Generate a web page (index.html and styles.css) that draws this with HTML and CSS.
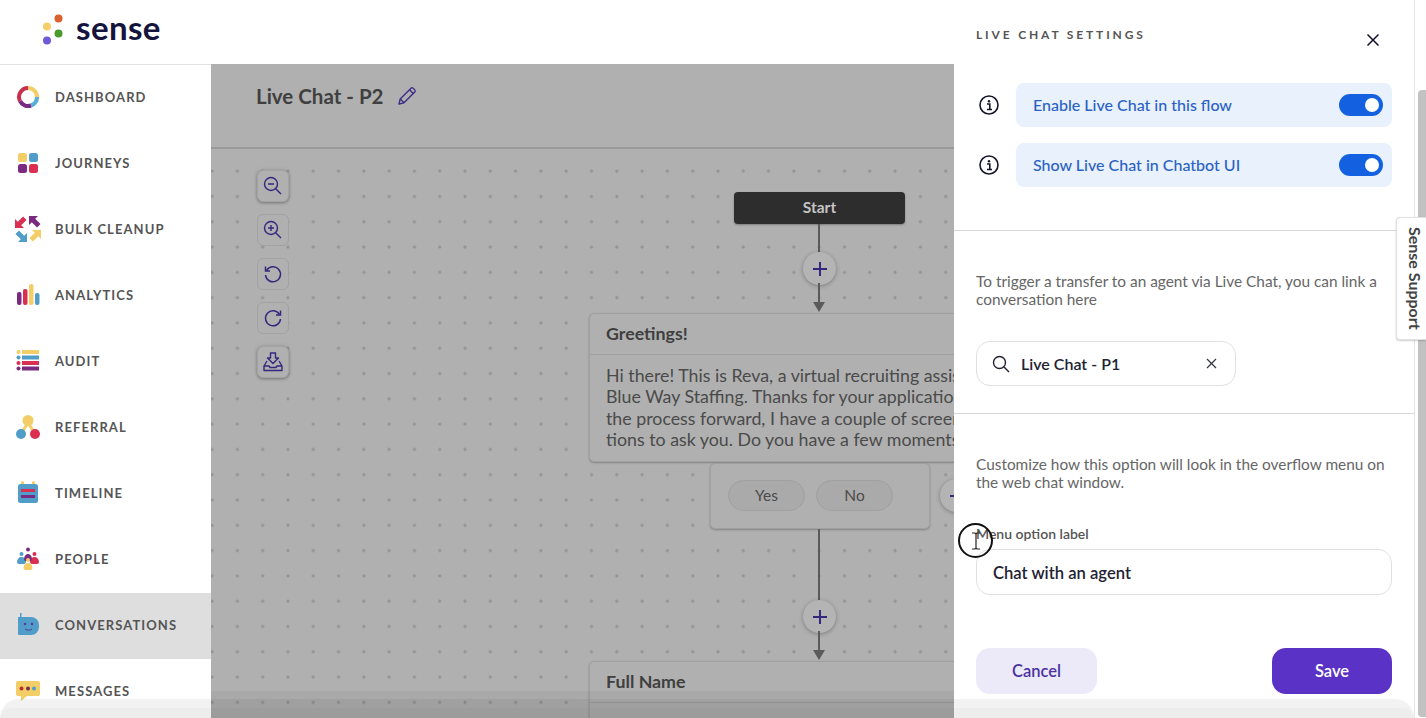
FILE: index.html
```html
<!DOCTYPE html>
<html lang="en">
<head>
    <meta charset="UTF-8">
    <title>Live Chat - P2</title>
    <link rel="stylesheet" href="styles.css">
</head>
<body>
    <div class="app">
        <header class="topbar">
            <svg class="logo-dots" width="26" height="34" viewBox="0 0 26 34">
                <circle cx="4" cy="12.500" r="4" fill="#f6cf6a"/>
                <circle cx="15.500" cy="4.500" r="4" fill="#d9612f"/>
                <circle cx="15.500" cy="19.500" r="4" fill="#4a9a2c"/>
                <circle cx="4" cy="26.500" r="4" fill="#7159d8"/>
            </svg>
            <span class="logo-text">sense</span>
        </header>
        <div class="body-row">
            <nav class="sidebar">
                <a class="nav-item">
                    <svg class="nav-icon" viewBox="0 0 24 24" fill="none" stroke-width="4">
                        <path d="M12 3a9 9 0 0 1 9 9" stroke="#f3cd66"/>
                        <path d="M21 12a9 9 0 0 1-6 8.500" stroke="#58aed6"/>
                        <path d="M15 20.500A9 9 0 0 1 4 16" stroke="#7a2a80"/>
                        <path d="M4 16A9 9 0 0 1 12 3" stroke="#c8304f"/>
                    </svg>
                    <span>DASHBOARD</span>
                </a>
                <a class="nav-item">
                    <svg class="nav-icon" viewBox="0 0 24 24">
                        <rect x="2" y="2" width="9" height="9" rx="2.500" fill="#f3cd66"/>
                        <rect x="13" y="2" width="9" height="9" rx="2.500" fill="#4f9dc8"/>
                        <rect x="2" y="13" width="9" height="9" rx="2.500" fill="#7a2a80"/>
                        <rect x="13" y="13" width="9" height="9" rx="2.500" fill="#d92f50"/>
                    </svg>
                    <span>JOURNEYS</span>
                </a>
                <a class="nav-item">
                    <svg class="nav-icon nav-icon-lg" viewBox="0 0 26 26">
                        <path transform="rotate(-90 6 6)" d="M0 0h9L6.200 2.800 11.500 8.100 8.100 11.500 2.800 6.200 0 9z" fill="#d92f50"/>
                        <path transform="translate(14 0)" d="M0 0h9L6.200 2.800 11.500 8.100 8.100 11.500 2.800 6.200 0 9z" fill="#7a2a80"/>
                        <path transform="translate(0 14) rotate(180 6 6)" d="M0 0h9L6.200 2.800 11.500 8.100 8.100 11.500 2.800 6.200 0 9z" fill="#4f9dc8"/>
                        <path transform="translate(14 14) rotate(90 6 6)" d="M0 0h9L6.200 2.800 11.500 8.100 8.100 11.500 2.800 6.200 0 9z" fill="#f3cd66"/>
                    </svg>
                    <span>BULK CLEANUP</span>
                </a>
                <a class="nav-item">
                    <svg class="nav-icon" viewBox="0 0 24 24">
                        <rect x="1" y="9" width="4.500" height="13" rx="2" fill="#7a2a80"/>
                        <rect x="7" y="6" width="4.500" height="16" rx="2" fill="#d92f50"/>
                        <rect x="13" y="1" width="4.500" height="21" rx="2" fill="#f3cd66"/>
                        <rect x="19" y="10" width="4.500" height="12" rx="2" fill="#4f9dc8"/>
                    </svg>
                    <span>ANALYTICS</span>
                </a>
                <a class="nav-item">
                    <svg class="nav-icon" viewBox="0 0 24 24">
                        <circle cx="2.500" cy="3" r="2" fill="#f3cd66"/>
                        <rect x="6" y="1" width="17" height="4" fill="#f3cd66"/>
                        <circle cx="2.500" cy="8.500" r="2" fill="#4f9dc8"/>
                        <rect x="6" y="6.500" width="17" height="4" fill="#4f9dc8"/>
                        <circle cx="2.500" cy="14" r="2" fill="#d92f50"/>
                        <rect x="6" y="12" width="17" height="4" fill="#d92f50"/>
                        <circle cx="2.500" cy="19.500" r="2" fill="#7a2a80"/>
                        <rect x="6" y="17.500" width="17" height="4" fill="#7a2a80"/>
                    </svg>
                    <span>AUDIT</span>
                </a>
                <a class="nav-item">
                    <svg class="nav-icon nav-icon-lg" viewBox="0 0 26 26">
                        <path d="M13 9 7 18M13 9l6 9" stroke="#f3cd66" stroke-width="3"/>
                        <circle cx="13" cy="6.500" r="5.500" fill="#f3cd66"/>
                        <circle cx="6" cy="20" r="5" fill="#4f9dc8"/>
                        <circle cx="20" cy="20" r="5" fill="#d92f50"/>
                    </svg>
                    <span>REFERRAL</span>
                </a>
                <a class="nav-item">
                    <svg class="nav-icon" viewBox="0 0 24 24">
                        <rect x="5" y="0" width="3" height="5" rx="1.500" fill="#f3cd66"/>
                        <rect x="16" y="0" width="3" height="5" rx="1.500" fill="#f3cd66"/>
                        <rect x="2" y="3" width="20" height="19" rx="2.500" fill="#4f9dc8"/>
                        <rect x="5" y="8" width="14" height="3" fill="#d92f50"/>
                        <rect x="5" y="14" width="14" height="3" fill="#7a2a80"/>
                    </svg>
                    <span>TIMELINE</span>
                </a>
                <a class="nav-item">
                    <svg class="nav-icon" viewBox="0 0 24 24">
                        <circle cx="12" cy="2.500" r="2" fill="#7a2a80"/>
                        <circle cx="5.500" cy="7" r="2" fill="#4f9dc8"/>
                        <circle cx="18.500" cy="7" r="2" fill="#d92f50"/>
                        <path d="M1 15c0-3 2-5 4.500-5S10 12 10 15c0 1-1 2-2 2H3c-1 0-2-1-2-2z" fill="#4f9dc8"/>
                        <path d="M14 15c0-3 2-5 4.500-5s4.500 2 4.500 5c0 1-1 2-2 2h-5c-1 0-2-1-2-2z" fill="#d92f50"/>
                        <path d="M8 12c0-3 2-5 4-5s4 2 4 5l-1 2H9z" fill="#7a2a80"/>
                        <circle cx="12" cy="13" r="2" fill="#f3cd66"/>
                        <path d="M7.500 21c0-3 2-5 4.500-5s4.500 2 4.500 5c0 1-1 2-2 2h-5c-1 0-2-1-2-2z" fill="#f3cd66"/>
                    </svg>
                    <span>PEOPLE</span>
                </a>
                <a class="nav-item active">
                    <svg class="nav-icon" viewBox="0 0 24 24">
                        <rect x="4" y="0" width="1.500" height="5" fill="#4f9dc8"/>
                        <path d="M2 4h13a8 8 0 0 1 8 8v2a8 8 0 0 1-8 8H3a1 1 0 0 1-1-1z" fill="#4f9dc8"/>
                        <circle cx="9" cy="11" r="1.300" fill="#5a3a9a"/>
                        <circle cx="16" cy="11" r="1.300" fill="#5a3a9a"/>
                        <path d="M9 16c2 1.500 5 1.500 7 0" stroke="#5a3a9a" fill="none"/>
                    </svg>
                    <span>CONVERSATIONS</span>
                </a>
                <a class="nav-item">
                    <svg class="nav-icon nav-icon-lg" viewBox="0 0 26 24">
                        <path d="M3 2h20a2 2 0 0 1 2 2v11a2 2 0 0 1-2 2H12l-6 5v-5H3a2 2 0 0 1-2-2V4a2 2 0 0 1 2-2z" fill="#f3cd66"/>
                        <circle cx="6.500" cy="9.500" r="2" fill="#b5302f"/>
                        <circle cx="13" cy="9.500" r="2" fill="#7a2a50"/>
                        <circle cx="19" cy="9.500" r="2" fill="#4f9dc8"/>
                    </svg>
                    <span>MESSAGES</span>
                </a>
            </nav>
            <main class="main">
                <div class="title-bar">
                    <h1>Live Chat - P2</h1>
                    <svg class="pencil" width="20" height="20" viewBox="0 0 20 20" fill="none" stroke="#3b2a86" stroke-width="1.300" stroke-linejoin="round">
                        <path d="M2 18l1.200-5L14 2.200a1.500 1.500 0 0 1 2.100 0l1.700 1.700a1.500 1.500 0 0 1 0 2.100L7 16.800z"/>
                        <path d="M3.200 13 7 16.800M12.500 3.700l3.800 3.800"/>
                    </svg>
                </div>
                <div class="canvas">
                    <div class="toolbar">
                        <button class="tool tool-raised">
                            <svg width="20" height="20" viewBox="0 0 20 20" fill="none" stroke="#35267e" stroke-width="1.400">
                                <circle cx="8" cy="8" r="6.500"/>
                                <path d="M5 8h6M12.700 12.700 18 18"/>
                            </svg>
                        </button>
                        <button class="tool">
                            <svg width="20" height="20" viewBox="0 0 20 20" fill="none" stroke="#35267e" stroke-width="1.400">
                                <circle cx="8" cy="8" r="6.500"/>
                                <path d="M5 8h6M8 5v6M12.700 12.700 18 18"/>
                            </svg>
                        </button>
                        <button class="tool">
                            <svg width="20" height="20" viewBox="0 0 20 20" fill="none" stroke="#35267e" stroke-width="1.500">
                                <path d="M3.500 6.500A7.500 7.500 0 1 1 2.500 11"/>
                                <path d="M2.500 2.500v4.500H7"/>
                            </svg>
                        </button>
                        <button class="tool">
                            <svg width="20" height="20" viewBox="0 0 20 20" fill="none" stroke="#35267e" stroke-width="1.500">
                                <path d="M16.500 6.500A7.500 7.500 0 1 0 17.500 11"/>
                                <path d="M17.500 2.500v4.500H13"/>
                            </svg>
                        </button>
                        <button class="tool tool-raised">
                            <svg width="20" height="20" viewBox="0 0 20 20" fill="none" stroke="#35267e" stroke-width="1.400" stroke-linejoin="round">
                                <path d="M7.500 1h5v5h3L10 11.500 4.500 6h3z"/>
                                <path d="M4 9 1 14v4.500h18V14l-3-5M1 14h5l1 1.500h6l1-1.500h5"/>
                            </svg>
                        </button>
                    </div>

                    <div class="node-start">Start</div>
                    <div class="wire wire-a"></div>
                    <div class="add-btn add-a">
                        <svg width="14" height="14" viewBox="0 0 14 14" stroke="#35267e" stroke-width="2"><path d="M7 0v14M0 7h14"/></svg>
                    </div>
                    <div class="wire wire-b"></div>
                    <div class="arrow arrow-a"></div>

                    <div class="card card-greet">
                        <div class="card-head">Greetings!</div>
                        <div class="card-text">Hi there! This is Reva, a virtual recruiting assistant from<br>Blue Way Staffing. Thanks for your application! To move<br>the process forward, I have a couple of screening ques-<br>tions to ask you. Do you have a few moments?</div>
                    </div>
                    <div class="reply-card">
                        <span class="pill">Yes</span>
                        <span class="pill">No</span>
                    </div>
                    <div class="add-btn add-side">
                        <svg width="14" height="14" viewBox="0 0 14 14" stroke="#35267e" stroke-width="2"><path d="M7 0v14M0 7h14"/></svg>
                    </div>

                    <div class="wire wire-c"></div>
                    <div class="add-btn add-b">
                        <svg width="14" height="14" viewBox="0 0 14 14" stroke="#35267e" stroke-width="2"><path d="M7 0v14M0 7h14"/></svg>
                    </div>
                    <div class="wire wire-d"></div>
                    <div class="arrow arrow-b"></div>

                    <div class="card card-name">
                        <div class="card-head">Full Name</div>
                    </div>
                </div>
            </main>
        </div>

        <aside class="panel">
            <div class="panel-top">
                <div class="panel-head">
                    <h2>LIVE CHAT SETTINGS</h2>
                    <svg class="close" width="14" height="14" viewBox="0 0 14 14" stroke="#10102a" stroke-width="1.500">
                        <path d="M1.500 1.500l11 11M12.500 1.500l-11 11"/>
                    </svg>
                </div>
                <div class="toggle-row">
                    <svg class="info" width="20" height="20" viewBox="0 0 20 20">
                        <circle cx="10" cy="10" r="9" fill="none" stroke="#15152a" stroke-width="1.600"/>
                        <circle cx="10" cy="6.200" r="1.200" fill="#15152a"/>
                        <path d="M8 9h2.800v5M8 14.500h5" fill="none" stroke="#15152a" stroke-width="1.600"/>
                    </svg>
                    <div class="toggle-box">
                        <span>Enable Live Chat in this flow</span>
                        <span class="switch"></span>
                    </div>
                </div>
                <div class="toggle-row">
                    <svg class="info" width="20" height="20" viewBox="0 0 20 20">
                        <circle cx="10" cy="10" r="9" fill="none" stroke="#15152a" stroke-width="1.600"/>
                        <circle cx="10" cy="6.200" r="1.200" fill="#15152a"/>
                        <path d="M8 9h2.800v5M8 14.500h5" fill="none" stroke="#15152a" stroke-width="1.600"/>
                    </svg>
                    <div class="toggle-box">
                        <span>Show Live Chat in Chatbot UI</span>
                        <span class="switch"></span>
                    </div>
                </div>
            </div>
            <div class="panel-link">
                <p>To trigger a transfer to an agent via Live Chat, you can link a conversation here</p>
                <div class="search-box">
                    <svg width="18" height="18" viewBox="0 0 18 18" fill="none" stroke="#222233" stroke-width="1.400">
                        <circle cx="7.500" cy="7.500" r="6"/>
                        <path d="M12 12l5 5"/>
                    </svg>
                    <span class="search-value">Live Chat - P1</span>
                    <svg width="11" height="11" viewBox="0 0 11 11" stroke="#333344" stroke-width="1.200">
                        <path d="M1 1l9 9M10 1l-9 9"/>
                    </svg>
                </div>
            </div>
            <div class="panel-custom">
                <p>Customize how this option will look in the overflow menu on the web chat window.</p>
                <label>Menu option label</label>
                <div class="text-input">Chat with an agent</div>
                <div class="panel-actions">
                    <button class="btn-cancel">Cancel</button>
                    <button class="btn-save">Save</button>
                </div>
            </div>
        </aside>

        <div class="scrollbar"><div class="scroll-thumb"></div></div>
        <div class="support-tab">Sense Support</div>
        <div class="bottom-fade"></div>
        <div class="cursor-ring">
            <svg width="10" height="18" viewBox="0 0 10 18" fill="none" stroke="#222" stroke-width="1.200">
                <path d="M1 1h3l1 1 1-1h3M5 2v14M1 17h3l1-1 1 1h3"/>
            </svg>
        </div>
    </div>
</body>
</html>
```

FILE: styles.css
```css
* {
    margin: 0;
    padding: 0;
    box-sizing: border-box;
}

html, body {
    width: 1426px;
    height: 718px;
    overflow: hidden;
    background: #fff;
}

body {
    font-family: "Lato", "Liberation Sans", sans-serif;
}

.app {
    position: relative;
    width: 1426px;
    height: 718px;
    display: flex;
    flex-direction: column;
    overflow: hidden;
}

/* top bar */
.topbar {
    height: 64px;
    flex: none;
    display: flex;
    align-items: center;
    gap: 7px;
    padding: 0 0 2px 43px;
    background: #fff;
}

.logo-text {
    font-size: 33px;
    font-weight: 700;
    color: #14143c;
    letter-spacing: 0.4px;
    line-height: 1;
    margin-top: -8px;
}

.body-row {
    flex: 1;
    display: flex;
    min-height: 0;
}

/* sidebar */
.sidebar {
    width: 211px;
    flex: none;
    background: #fff;
    border-top: 1px solid #e2e2e2;
}

.nav-item {
    height: 66px;
    display: flex;
    align-items: center;
    gap: 15px;
    padding: 0 0 2px 16px;
    font-size: 13px;
    font-weight: 700;
    letter-spacing: 1.080px;
    color: #555;
}

.nav-item.active {
    background: #dedede;
}

.nav-icon {
    width: 24px;
    height: 24px;
    flex: none;
}

.nav-icon-lg {
    width: 26px;
    height: 26px;
    margin: 0 -1px;
}

/* main area */
.main {
    flex: 1;
    background: #b0b0b0;
    display: flex;
    flex-direction: column;
    min-width: 0;
}

.title-bar {
    height: 85px;
    flex: none;
    display: flex;
    align-items: flex-start;
    gap: 14px;
    padding: 19px 0 0 45px;
    border-bottom: 2px solid #999;
}

.title-bar h1 {
    font-size: 20.500px;
    font-weight: 700;
    color: #3f3f3f;
    line-height: 26px;
}

.pencil {
    margin-top: 3px;
}

.canvas {
    position: relative;
    flex: 1;
    background-color: #b0b0b0;
    background-image: radial-gradient(circle, #939393 1.300px, transparent 1.800px);
    background-size: 25.300px 25.300px;
    background-position: -11.600px 9.500px;
    overflow: hidden;
}

.canvas::after {
    content: "";
    position: absolute;
    left: 0;
    right: 0;
    bottom: 0;
    height: 27px;
    background: rgba(0, 0, 0, 0.035);
}

.toolbar {
    position: absolute;
    left: 46px;
    top: 21px;
    display: flex;
    flex-direction: column;
    gap: 12px;
}

.tool {
    width: 32px;
    height: 32px;
    display: flex;
    align-items: center;
    justify-content: center;
    background: #b0b0b0;
    border: 1px solid #a2a2a2;
    border-radius: 6px;
}

.tool-raised {
    box-shadow: 0 1px 3px rgba(0, 0, 0, 0.3), 0 0 5px rgba(0, 0, 0, 0.08);
}

.node-start {
    position: absolute;
    left: 523px;
    top: 43px;
    width: 171px;
    height: 32px;
    background: #2d2d2d;
    border-radius: 4px;
    color: #c4c4c4;
    font-size: 15.500px;
    font-weight: 700;
    text-align: center;
    line-height: 30px;
    box-shadow: 0 1px 2px rgba(0, 0, 0, 0.3);
}

.wire {
    position: absolute;
    left: 607px;
    width: 2px;
    background: #5a5a5a;
}

.wire-a { top: 75px; height: 30px; }
.wire-b { top: 134px; height: 22px; }
.wire-c { top: 380px; height: 72px; }
.wire-d { top: 482px; height: 20px; }

.arrow {
    position: absolute;
    left: 602px;
    width: 0;
    height: 0;
    border-left: 6px solid transparent;
    border-right: 6px solid transparent;
    border-top: 10px solid #5a5a5a;
}

.arrow-a { top: 153px; }
.arrow-b { top: 501px; }

.add-btn {
    position: absolute;
    width: 33px;
    height: 33px;
    border-radius: 50%;
    background: #b4b4b4;
    box-shadow: 0 1px 4px rgba(0, 0, 0, 0.3);
    display: flex;
    align-items: center;
    justify-content: center;
}

.add-a { left: 592px; top: 103px; }
.add-b { left: 592px; top: 451px; }
.add-side { left: 729px; top: 330px; }

.card {
    position: absolute;
    left: 378px;
    width: 500px;
    background: #b0b0b0;
    border: 1px solid #a0a0a0;
    border-radius: 5px;
    box-shadow: 0 1px 2px rgba(0, 0, 0, 0.25);
}

.card-greet {
    top: 164px;
    height: 149px;
}

.card-name {
    top: 512px;
    height: 120px;
}

.card-head {
    height: 41px;
    padding-left: 16px;
    border-bottom: 1px solid #a0a0a0;
    font-size: 17.800px;
    font-weight: 700;
    color: #3f3f3f;
    line-height: 38px;
}

.card-text {
    padding: 10px 0 0 16px;
    font-size: 17.800px;
    line-height: 21.300px;
    color: #4a4a4a;
    white-space: nowrap;
}

.reply-card {
    position: absolute;
    left: 499px;
    top: 314px;
    width: 220px;
    height: 66px;
    display: flex;
    align-items: center;
    gap: 11px;
    padding: 0 0 2px 17px;
    background: #b0b0b0;
    border: 1px solid #a0a0a0;
    border-radius: 5px;
    box-shadow: 0 1px 2px rgba(0, 0, 0, 0.25);
}

.pill {
    width: 77px;
    height: 31px;
    border: 1px solid #a0a0a0;
    border-radius: 16px;
    background: #aaa;
    color: #4a4a4a;
    font-size: 15.500px;
    text-align: center;
    line-height: 28px;
}

/* settings drawer, sits over the flow editor */
.panel {
    position: absolute;
    top: 0;
    left: 954px;
    width: 460px;
    height: 718px;
    background: #fff;
}

.panel-top {
    height: 231px;
    padding: 0 22px;
    border-bottom: 1px solid #d8d8d8;
}

.panel-head {
    height: 83px;
    display: flex;
    justify-content: space-between;
    padding-top: 27px;
}

.panel-head h2 {
    font-size: 12px;
    font-weight: 700;
    letter-spacing: 2.850px;
    color: #555;
    line-height: 15px;
}

.close {
    margin: 6px 12px 0 0;
}

.toggle-row {
    display: flex;
    align-items: center;
    gap: 17px;
    margin: 0 0 16.500px 3px;
}

.toggle-box {
    flex: 1;
    height: 43.500px;
    display: flex;
    align-items: center;
    justify-content: space-between;
    padding: 0 9px 0 17px;
    background: #e9f1fd;
    border-radius: 8px;
    color: #2a62c4;
    font-size: 16px;
    font-weight: 500;
}

.switch {
    position: relative;
    width: 44px;
    height: 22px;
    border-radius: 11px;
    background: #1361e0;
}

.switch::after {
    content: "";
    position: absolute;
    right: 4px;
    top: 4px;
    width: 14px;
    height: 14px;
    border-radius: 50%;
    background: #fff;
}

.panel-link {
    height: 183px;
    padding: 41px 22px 0;
    border-bottom: 1px solid #d8d8d8;
}

.panel-link p,
.panel-custom p {
    font-size: 15.400px;
    line-height: 18px;
    color: #666;
}

.search-box {
    width: 260px;
    height: 45px;
    margin-top: 33px;
    display: flex;
    align-items: center;
    gap: 11px;
    padding: 0 18px 0 15px;
    border: 1px solid #e0e0e0;
    border-radius: 14px;
}

.search-value {
    flex: 1;
    font-size: 16px;
    font-weight: 600;
    color: #222233;
}

.panel-custom {
    padding: 41px 22px 0;
}

.panel-custom label {
    display: block;
    margin-top: 35px;
    font-size: 14px;
    font-weight: 600;
    line-height: 16px;
    color: #555;
}

.text-input {
    height: 46px;
    margin-top: 7px;
    padding-left: 16px;
    border: 1px solid #e0e0e0;
    border-radius: 14px;
    font-size: 16.600px;
    font-weight: 600;
    line-height: 46px;
    color: #222233;
}

.panel-actions {
    display: flex;
    justify-content: space-between;
    margin-top: 53px;
}

.panel-actions button {
    width: 121px;
    height: 46px;
    border: none;
    border-radius: 14px;
    font-family: inherit;
    font-size: 16.500px;
    font-weight: 600;
}

.btn-cancel {
    background: #ece9f9;
    color: #4a32a0;
}

.panel-actions .btn-save {
    width: 120px;
    background: #5a33c6;
    color: #fff;
}

/* page scrollbar and support tab */
.scrollbar {
    position: absolute;
    top: 0;
    right: 0;
    width: 12px;
    height: 718px;
    background: #fff;
    border-left: 1px solid #e4e4e4;
}

.scroll-thumb {
    position: absolute;
    left: 3px;
    top: 90px;
    width: 9px;
    height: 627px;
    background: #c2c2c2;
    border-radius: 4px 0 0 4px;
}

.support-tab {
    position: absolute;
    top: 217px;
    left: 1396px;
    width: 30px;
    height: 123px;
    writing-mode: vertical-rl;
    text-align: center;
    background: #fff;
    border: 1px solid #e0e0e0;
    border-right: none;
    border-radius: 4px 0 0 4px;
    box-shadow: 0 1px 2px rgba(0, 0, 0, 0.2);
    font-size: 16px;
    font-weight: 700;
    line-height: 22px;
    color: #444;
}

.bottom-fade {
    position: absolute;
    left: 0;
    bottom: 0;
    width: 1414px;
    height: 19px;
    background: rgba(0, 0, 0, 0.05);
    border-radius: 24px 24px 0 0;
}

.bottom-fade::after {
    content: "";
    position: absolute;
    left: 0;
    right: 0;
    bottom: 0;
    height: 10px;
    background: rgba(0, 0, 0, 0.02);
    border-radius: 12px 12px 0 0;
}

.cursor-ring {
    position: absolute;
    left: 958px;
    top: 523px;
    width: 35px;
    height: 35px;
    display: flex;
    align-items: center;
    justify-content: center;
    border: 2px solid #111;
    border-radius: 50%;
}
```
